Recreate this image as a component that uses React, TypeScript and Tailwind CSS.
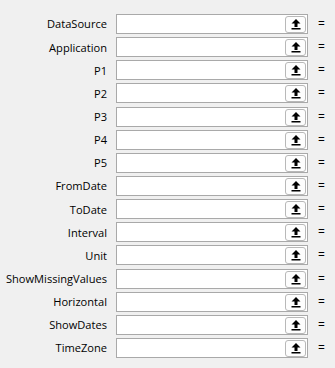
const fields = [
  "DataSource",
  "Application",
  "P1",
  "P2",
  "P3",
  "P4",
  "P5",
  "FromDate",
  "ToDate",
  "Interval",
  "Unit",
  "ShowMissingValues",
  "Horizontal",
  "ShowDates",
  "TimeZone",
];

function UpArrow() {
  return (
    <svg width="10" height="11" viewBox="0 0 10 11">
      <path d="M5 0 L0.5 4.5 L3.5 4.5 L3.5 8 L6.5 8 L6.5 4.5 L9.5 4.5 Z" fill="#000" />
      <rect x="0.5" y="9" width="9" height="1.5" fill="#000" />
    </svg>
  );
}

export default function App() {
  return (
    <div
      className="w-[335px] h-[368px] bg-[#f0f0f0] pt-[14px] flex flex-col gap-[3.15px]"
      style={{ fontFamily: '"Open Sans", "Noto Sans", sans-serif' }}
    >
      {fields.map((name) => (
        <div key={name} className="flex items-center h-[20px]">
          <div className="w-[107px] text-right text-[11.1px] text-black leading-none">
            {name}
          </div>
          <div className="ml-[9px] w-[192px] h-[20px] border border-[#a9a9a9] bg-white flex justify-end items-start">
            <button className="w-[21px] h-[17px] mt-[1px] mr-[1px] rounded-[3px] border border-[#b8b8b8] bg-[#fdfdfd] flex items-center justify-center">
              <UpArrow />
            </button>
          </div>
          <div className="ml-[10px] text-[12px] text-black leading-none">=</div>
        </div>
      ))}
    </div>
  );
}
